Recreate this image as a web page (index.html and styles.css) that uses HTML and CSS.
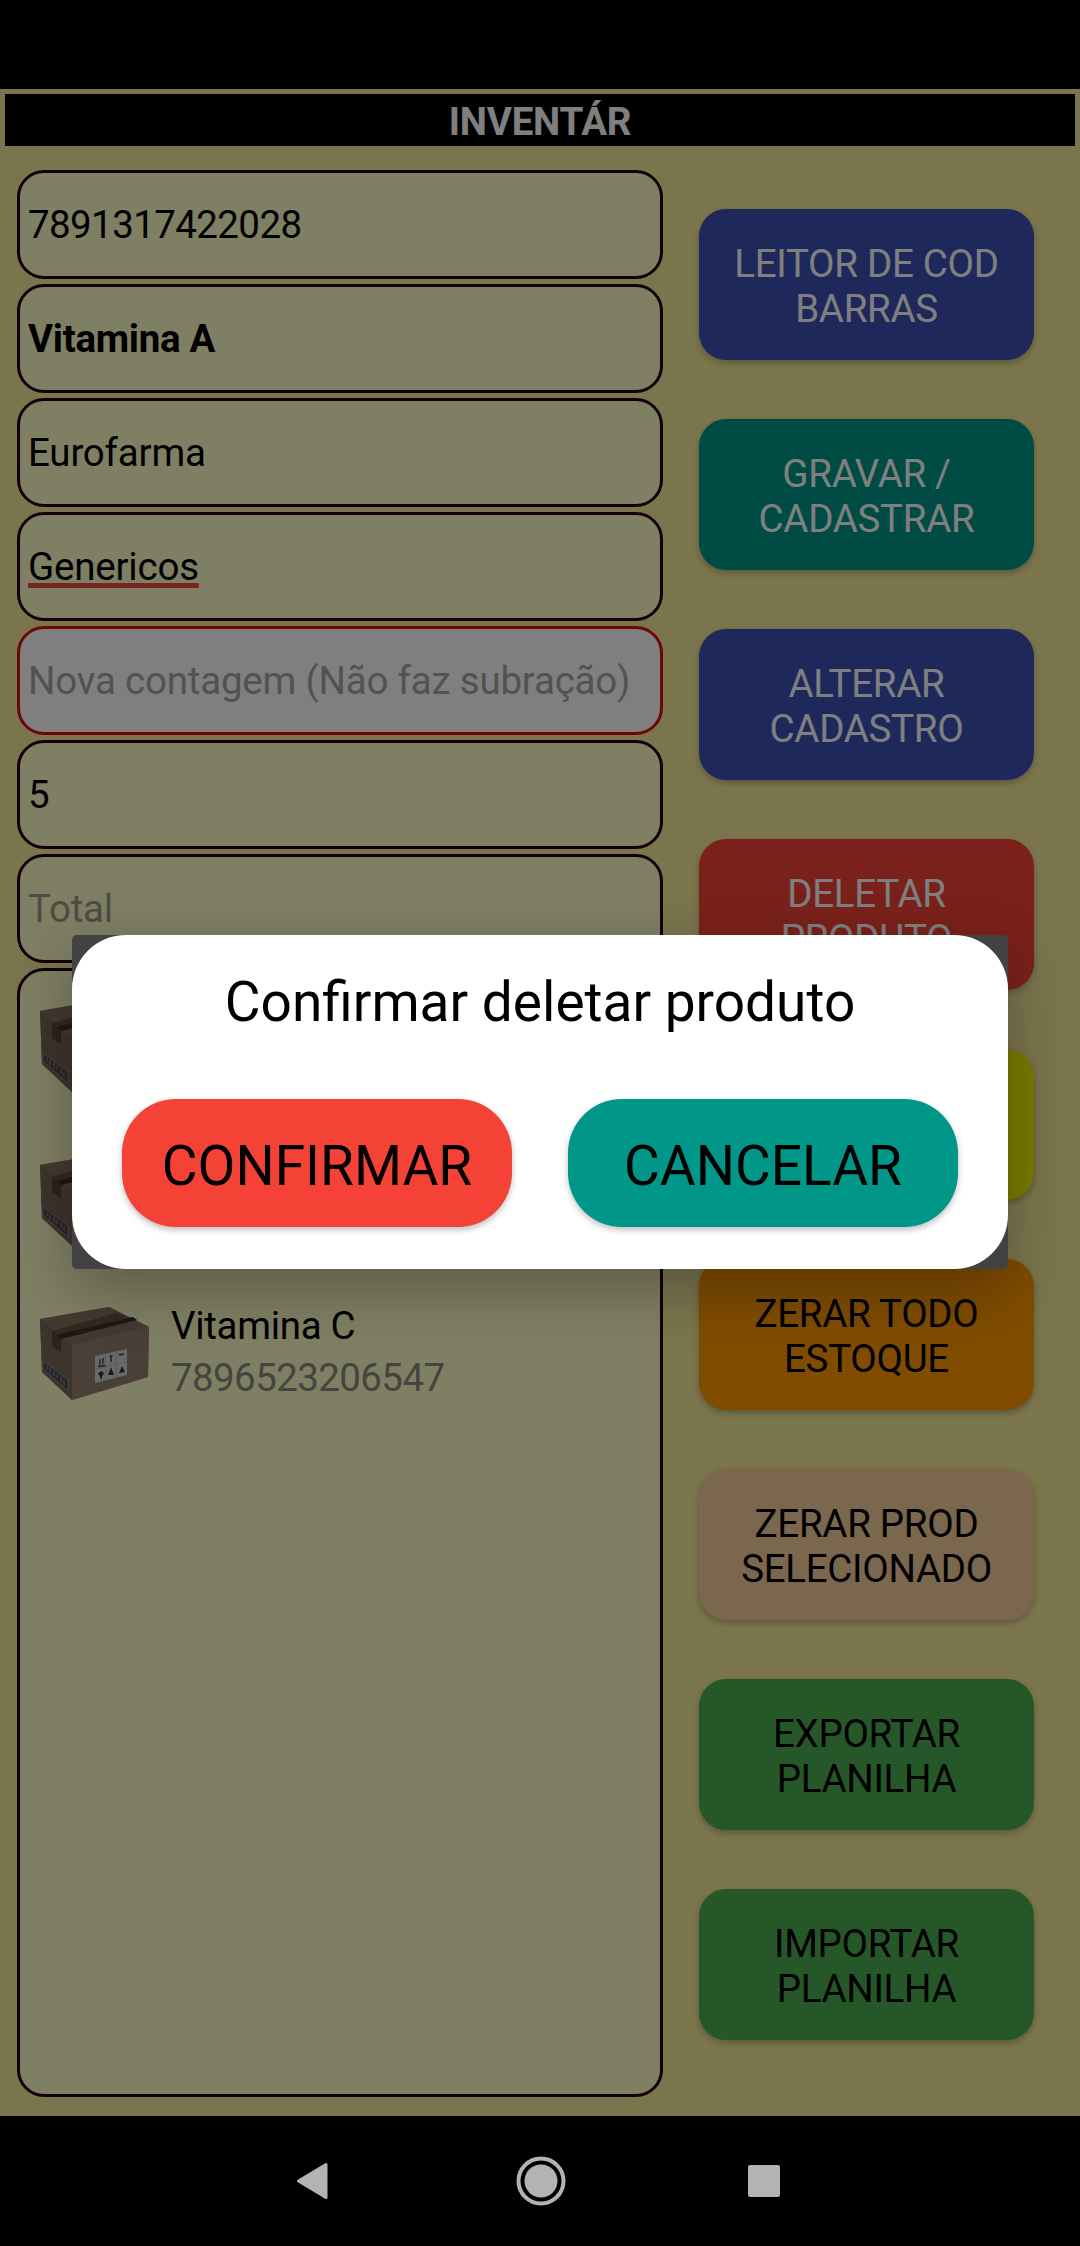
FILE: index.html
```html
<!DOCTYPE html>
<html lang="pt-BR">
<head>
  <meta charset="UTF-8" />
  <meta name="viewport" content="width=device-width, initial-scale=1.0"/>
  <title>Inventário</title>
  <link rel="stylesheet" href="styles.css">
</head>
<body>
  <!-- Desenho da caixa usado em cada item da lista -->
  <svg class="sprite" aria-hidden="true">
    <symbol id="caixa" viewBox="0 0 110 94">
      <polygon points="0,12 69,0 109,20 108,70 32,93 2,65" fill="#98836f"/>
      <polygon points="0,12 69,0 109,20 32,38" fill="#877361"/>
      <polygon points="0,12 32,38 32,93 2,65" fill="#7a6858"/>
      <polygon points="32,38 109,20 108,70 32,93" fill="#948070"/>
      <polygon points="12,24 76,6 97,13 21,32" fill="#66523f"/>
      <polygon points="16,28 93,10 97,13 21,32" fill="#42302a"/>
      <polygon points="12,24 21,32 21,45 12,39" fill="#57453a"/>
      <polygon points="3,54 28,73 28,84 3,62" fill="#4c4a4e" stroke="#9a9a9e" stroke-width="0.7"/>
      <path d="M7 59v4M10 61v5M14 64v5M17 67v4M21 70v5M24 73v5" stroke="#808490" stroke-width="1.300"/>
      <polygon points="55,49 87,42 87,68 55,76" fill="#d2d2d4"/>
      <path d="M65.500 47v26M76 45v26M55 62l32-7" fill="none" stroke="#aaa" stroke-width="0.7"/>
      <path d="M60 52v6M63 51v6M58 59.500l7-1M71 49v6M69.500 49h3M79 48l5-1" fill="none" stroke="#333" stroke-width="1.300"/>
      <path d="M58 66l4-2 2 3-2 2v4l-2-3zM71 60l3 8h-6zM79 66l3-7 3 6z" fill="#333"/>
    </symbol>
  </svg>

  <div class="phone">
    <div class="status-bar"></div>

    <div class="app">
      <h1 class="title">INVENTÁR</h1>

      <div class="content">
        <!-- Dados do produto -->
        <div class="form">
          <div class="field digits">7891317422028</div>
          <div class="field bold">Vitamina A</div>
          <div class="field">Eurofarma</div>
          <div class="field"><span class="typo">Genericos</span></div>
          <div class="field alert hint">Nova contagem (Não faz subração)</div>
          <div class="field">5</div>
          <div class="field hint">Total</div>

          <div class="list">
            <div class="item">
              <svg class="box"><use href="#caixa"/></svg>
              <div class="info"></div>
            </div>
            <div class="item">
              <svg class="box"><use href="#caixa"/></svg>
              <div class="info"></div>
            </div>
            <div class="item">
              <svg class="box"><use href="#caixa"/></svg>
              <div class="info">
                <div class="name">Vitamina C</div>
                <div class="code digits">7896523206547</div>
              </div>
            </div>
          </div>
        </div>

        <!-- Ações -->
        <div class="actions">
          <button class="button indigo">LEITOR DE COD<br>BARRAS</button>
          <button class="button teal">GRAVAR /<br>CADASTRAR</button>
          <button class="button indigo">ALTERAR<br>CADASTRO</button>
          <button class="button red">DELETAR<br>PRODUTO</button>
          <button class="button yellow"></button>
          <button class="button orange">ZERAR TODO<br>ESTOQUE</button>
          <button class="button peach">ZERAR PROD<br>SELECIONADO</button>
          <button class="button green">EXPORTAR<br>PLANILHA</button>
          <button class="button green">IMPORTAR<br>PLANILHA</button>
        </div>
      </div>

      <!-- Confirmação -->
      <div class="overlay">
        <div class="dialog">
          <div class="dialog-body">
            <h2>Confirmar deletar produto</h2>
            <div class="dialog-buttons">
              <button class="confirm">CONFIRMAR</button>
              <button class="cancel">CANCELAR</button>
            </div>
          </div>
        </div>
      </div>
    </div>

    <div class="nav-bar">
      <svg width="32" height="40" viewBox="0 0 32 40"><path d="M30 3.500v33L2.500 20z" fill="#b3b3b3" stroke="#b3b3b3" stroke-width="3" stroke-linejoin="round"/></svg>
      <svg width="50" height="50" viewBox="0 0 50 50"><circle cx="25" cy="25" r="22.500" fill="none" stroke="#b3b3b3" stroke-width="4"/><circle cx="25" cy="25" r="16.500" fill="#b3b3b3"/></svg>
      <svg width="32" height="32" viewBox="0 0 32 32"><rect width="32" height="32" rx="2" fill="#b3b3b3"/></svg>
    </div>
  </div>
</body>
</html>
```
FILE: styles.css
```css
* {
  box-sizing: border-box;
}
body {
  margin: 0;
  background-color: #000;
  font-family: Roboto, sans-serif;
  color: black;
}
h1, h2 {
  margin: 0;
}
.sprite {
  display: none;
}
.phone {
  width: 1080px;
  height: 2246px;
  display: flex;
  flex-direction: column;
  overflow: hidden;
}
.status-bar {
  height: 89px;
}
.app {
  position: relative;
  height: 2027px;
  padding: 5px;
  background-color: #f7eb9a;
}
.title {
  height: 52px;
  background-color: black;
  color: white;
  font-size: 38.5px;
  line-height: 55px;
  letter-spacing: -0.2px;
  text-align: center;
}
.content {
  display: flex;
  justify-content: space-between;
  padding: 24px 41px 0 12px;
}
.form {
  width: 646px;
  display: flex;
  flex-direction: column;
  gap: 5px;
}
.field {
  height: 109px;
  padding-left: 8px;
  border: 3px solid #260010;
  border-radius: 27px;
  background-color: #ffffc8;
  font-size: 38.5px;
  line-height: 104px;
  letter-spacing: -0.2px;
  white-space: nowrap;
}
.bold {
  font-weight: bold;
  letter-spacing: -0.3px;
}
.digits {
  letter-spacing: -0.6px;
}
.hint {
  color: #9a9a88;
}
.alert {
  border-color: #da0c0c;
  background-color: #fff;
  color: #a4a4a4;
}
.typo {
  text-decoration: underline;
  text-decoration-color: #f04a44;
  text-decoration-thickness: 5px;
  text-underline-offset: 3px;
  text-decoration-skip-ink: none;
}
.list {
  height: 1129px;
  padding: 28px 20px;
  border: 3px solid #260010;
  border-radius: 27px;
  background-color: #ffffc8;
}
.item {
  display: flex;
  height: 154px;
}
.box {
  width: 110px;
  height: 94px;
}
.info {
  margin-top: -3px;
  padding-left: 21px;
  font-size: 38.5px;
  letter-spacing: -0.3px;
}
.name {
  line-height: 44px;
}
.code {
  margin-top: 7px;
  line-height: 46px;
  color: #8a8a80;
}
.actions {
  width: 335px;
  padding-top: 39px;
  display: flex;
  flex-direction: column;
  gap: 59px;
}
.button {
  height: 151px;
  padding: 3px 0 0;
  border: none;
  border-radius: 27px;
  color: black;
  font-family: inherit;
  font-size: 38.5px;
  line-height: 45px;
  letter-spacing: -0.3px;
  box-shadow: 0 3px 6px rgba(0, 0, 0, 0.25);
}
.indigo {
  background-color: #3f51b5;
  color: white;
}
.teal {
  background-color: #009688;
  color: white;
}
.red {
  background-color: #f44336;
  color: white;
}
.yellow {
  background-color: #f4f400;
}
.orange {
  background-color: #ff9800;
}
.peach {
  background-color: #f6ce9c;
}
.green {
  background-color: #4caf50;
}

/* Escurece a tela atrás do diálogo */
.overlay {
  position: absolute;
  inset: 0;
  display: flex;
  justify-content: center;
  align-items: center;
  padding-bottom: 2px;
  background-color: rgba(0, 0, 0, 0.5);
}
.dialog {
  width: 936px;
  height: 334px;
  border-radius: 5px;
  background-color: #424242;
  box-shadow: 0 20px 60px rgba(0, 0, 0, 0.28);
}
.dialog-body {
  height: 100%;
  padding: 35px 50px 0;
  border-radius: 54px;
  background-color: white;
}
.dialog h2 {
  font-size: 55px;
  font-weight: normal;
  line-height: 64px;
  text-align: center;
}
.dialog-buttons {
  display: flex;
  gap: 56px;
  margin-top: 65px;
}
.dialog-buttons button {
  flex: 1;
  height: 128px;
  padding: 6px 0 0;
  border: none;
  border-radius: 54px;
  color: black;
  font-family: inherit;
  font-size: 55px;
  box-shadow: 0 3px 6px rgba(0, 0, 0, 0.25);
}
.dialog-buttons .confirm {
  background-color: #f44336;
}
.dialog-buttons .cancel {
  background-color: #009688;
}
.nav-bar {
  flex: 1;
  display: grid;
  grid-template-columns: 220px 232px 32px;
  align-items: center;
  padding-left: 296px;
}
```
